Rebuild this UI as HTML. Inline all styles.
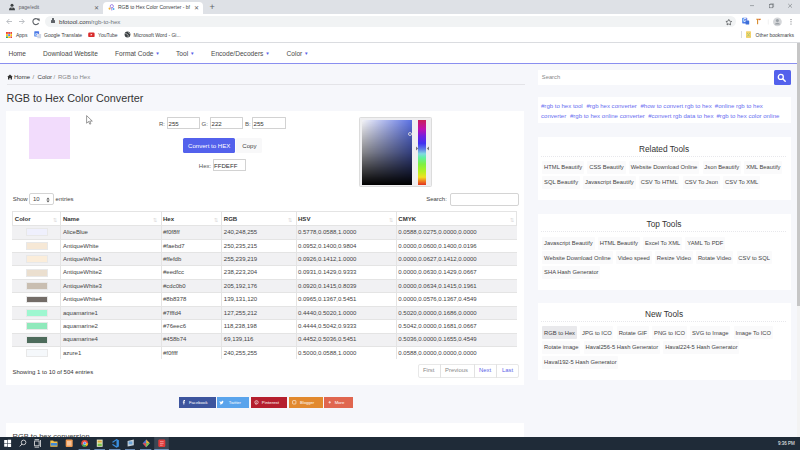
<!DOCTYPE html>
<html><head><meta charset="utf-8">
<style>
*{margin:0;padding:0;box-sizing:border-box}
html,body{width:800px;height:450px;overflow:hidden;background:#f6f7fb;font-family:"Liberation Sans",sans-serif;color:#333}
.a{position:absolute}
.t{position:absolute;white-space:nowrap;line-height:1}
/* chrome */
#tabbar{left:0;top:0;width:800px;height:14px;background:#dee1e6}
#toolbar{left:0;top:14px;width:800px;height:28.6px;background:#fff;border-bottom:0.6px solid #dadce0}
#omni{left:45px;top:16px;width:691px;height:10.5px;background:#f1f3f4;border-radius:6px}
#nav{left:0;top:42.6px;width:797px;height:21.6px;background:#fff;border-bottom:1.2px solid #8a8ff0}
#scroll{left:796.5px;top:42.6px;width:3.5px;height:395px;background:#f3f3f3}
#thumb{left:796.8px;top:42.6px;width:3.2px;height:263px;background:#c6c6c6}
.card{position:absolute;background:#fff}
.inp{position:absolute;background:#fff;border:0.6px solid #d2d2d2;border-radius:0.5px}
.tb{position:absolute;background:#f7f7f8;border-radius:1px}
#taskbar{left:0;top:437px;width:800px;height:13px;background:#1f2b38}
table{border-collapse:collapse}
</style></head><body>

<!-- tab bar -->
<div id="tabbar" class="a"></div>
<div class="a" style="left:103px;top:2px;width:100px;height:12px;background:#fff;border-radius:4px 4px 0 0"></div>
<svg class="a" style="left:8px;top:3px" width="8" height="8" viewBox="0 0 8 8"><circle cx="4" cy="2.3" r="1.5" fill="#3c4043"/><path d="M1 7.2C1 5 2.2 4.2 4 4.2S7 5 7 7.2z" fill="#3c4043"/><path d="M3.4 4.3 4 6 4.6 4.3" fill="#fff" stroke="none"/></svg>
<svg class="a" style="left:108px;top:3.5px" width="7" height="7" viewBox="0 0 7 7"><circle cx="3.8" cy="2.2" r="1.6" fill="none" stroke="#8a6de0" stroke-width="0.8"/><path d="M3.8 3.8V6.5" stroke="#8a6de0" stroke-width="0.8"/><circle cx="1.6" cy="4.6" r="1.1" fill="#f0b030"/><circle cx="5.6" cy="5" r="0.9" fill="#40b0f0"/></svg>
<div class="t" style="left:18.7px;top:5px;font-size:5px;color:#5f6368">page/edit</div>
<div class="t" style="left:94px;top:4.5px;font-size:6px;color:#5f6368">✕</div>
<div class="t" style="left:118px;top:5px;font-size:5px;color:#3c4043">RGB to Hex Color Converter - bf</div>
<div class="t" style="left:193.8px;top:4.5px;font-size:6px;color:#5f6368">✕</div>
<div class="t" style="left:209.5px;top:3px;font-size:9px;color:#5f6368">+</div>
<div class="t" style="left:150px;top:3px;font-size:7px;color:#5f6368;display:none">x</div>
<svg class="a" style="left:720px;top:0;z-index:5" width="80" height="42" viewBox="0 0 80 42"><g transform="translate(20 0)"><g fill="none" stroke="#6b6f74" stroke-width="0.55"><path d="M10 5.6h4"/><rect x="29.6" y="4.6" width="3.2" height="3.2"/><path d="M30.4 4.6V3.8h3.2v3.2h-0.8"/><path d="M48.2 3.9l3.8 3.8M52 3.9l-3.8 3.8"/></g><path d="M-11.2 19.4l0.9 1.8 2 0.3-1.45 1.4 0.35 2-1.8-0.95-1.8 0.95 0.35-2-1.45-1.4 2-0.3z" fill="none" stroke="#3c4043" stroke-width="0.65" stroke-linejoin="round"/><rect x="2.2" y="17.8" width="5" height="5.6" rx="0.6" fill="#4b78e6"/><text x="2.9" y="22.4" font-size="4.6" font-family="Liberation Sans" font-weight="bold" fill="#fff">G</text><rect x="5.6" y="20.6" width="3.6" height="3.8" rx="0.5" fill="#3c6fd8"/><path d="M16.3 19.2h4.6M17.6 19.2v5" stroke="#d88a2a" stroke-width="1.1"/><path d="M19.6 19v1.2" stroke="#e04040" stroke-width="0.8"/><path d="M28.3 19.5v5" stroke="#e3e3e3" stroke-width="0.5"/><circle cx="37.4" cy="21.8" r="4.4" fill="#d4d6d9"/><circle cx="37.4" cy="20.4" r="1.5" fill="#9aa0a6"/><path d="M34.6 24.6a2.9 2.4 0 0 1 5.6 0z" fill="#9aa0a6"/><g fill="#5f6368"><circle cx="51" cy="19.6" r="0.55"/><circle cx="51" cy="21.8" r="0.55"/><circle cx="51" cy="24" r="0.55"/></g><rect x="6" y="31.3" width="5" height="6.6" rx="0.6" fill="#f4d36b"/><path d="M7 33l1.5 1.5 1.5-1.5M7 36.5l1.5-1.5 1.5 1.5" stroke="#7fc37a" stroke-width="0.6" fill="none"/></g></svg>



<!-- toolbar -->
<div id="toolbar" class="a"></div>
<div id="omni" class="a"></div>
<svg class="a" style="left:0;top:14px" width="50" height="20" viewBox="0 0 50 20"><path d="M12 7.5H6.8M9.3 5 6.8 7.5 9.3 10" fill="none" stroke="#b5b9be" stroke-width="0.9"/><path d="M19 7.5H24.2M21.7 5 24.2 7.5 21.7 10" fill="none" stroke="#b5b9be" stroke-width="0.9"/><path d="M38.6 6.3A3 3 0 1 0 38.6 8.9" fill="none" stroke="#5f6368" stroke-width="1.1"/><path d="M36.6 4.4h3v3z" fill="#5f6368"/></svg>
<div class="a" style="left:51px;top:20px;width:3.5px;height:3px;background:#5f6368;border-radius:0.5px"></div>
<div class="a" style="left:51.6px;top:18.3px;width:2.4px;height:2.6px;border:0.7px solid #5f6368;border-bottom:none;border-radius:1.2px 1.2px 0 0"></div>
<div class="t" style="left:59px;top:18.8px;font-size:6.15px;color:#3c4043">bfotool.com<span style="color:#70757a">/rgb-to-hex</span></div>






<!-- bookmarks -->
<svg class="a" style="left:5.8px;top:31.5px" width="6.5" height="6.5" viewBox="0 0 6.5 6.5"><rect x="0.0" y="0.0" width="1.9" height="1.9" fill="#ea4335"/><rect x="2.2" y="0.0" width="1.9" height="1.9" fill="#ea4335"/><rect x="4.4" y="0.0" width="1.9" height="1.9" fill="#ea4335"/><rect x="0.0" y="2.2" width="1.9" height="1.9" fill="#fbbc04"/><rect x="2.2" y="2.2" width="1.9" height="1.9" fill="#4285f4"/><rect x="4.4" y="2.2" width="1.9" height="1.9" fill="#fbbc04"/><rect x="0.0" y="4.4" width="1.9" height="1.9" fill="#34a853"/><rect x="2.2" y="4.4" width="1.9" height="1.9" fill="#fbbc04"/><rect x="4.4" y="4.4" width="1.9" height="1.9" fill="#ea4335"/></svg>
<div class="t" style="left:16px;top:33px;font-size:5px;color:#3c4043">Apps</div>
<svg class="a" style="left:33.5px;top:31px" width="8" height="8" viewBox="0 0 8 8"><rect x="0.3" y="0.2" width="4.8" height="5.4" rx="0.6" fill="#4b78e6"/><rect x="3.3" y="3" width="3.8" height="4.2" rx="0.5" fill="#cfd6e4"/><text x="0.9" y="4.6" font-size="4.3" font-family="Liberation Sans" font-weight="bold" fill="#fff">G</text></svg>
<div class="t" style="left:44px;top:33px;font-size:5px;color:#3c4043">Google Translate</div>
<svg class="a" style="left:87.5px;top:31.8px" width="7" height="6" viewBox="0 0 7 6"><rect x="0.2" y="0.5" width="6.4" height="4.6" rx="1.2" fill="#d92b2b"/><path d="M2.7 1.8v2l1.7-1z" fill="#fff"/></svg>
<div class="t" style="left:98px;top:33px;font-size:5px;color:#3c4043">YouTube</div>
<svg class="a" style="left:123.5px;top:31px" width="7" height="7" viewBox="0 0 7 7"><circle cx="3.5" cy="3.5" r="2.9" fill="#3c4043"/><path d="M1.2 2.6C2.4 2.2 2.8 3.4 3.6 3.6S4.4 5.2 3.8 6.2M4.8 1.1C4.4 1.8 5 2.4 6 2.6" fill="none" stroke="#fff" stroke-width="0.55"/></svg>
<div class="t" style="left:133.5px;top:33px;font-size:5px;color:#3c4043">Microsoft Word - Gi...</div>
<div class="a" style="left:740.5px;top:31px;width:0.6px;height:7px;background:#dadce0"></div>

<div class="t" style="left:755.6px;top:33px;font-size:5px;color:#3c4043">Other bookmarks</div>

<!-- nav -->
<div id="nav" class="a"></div>
<div class="t" style="left:8.4px;top:50.5px;font-size:6.6px;color:#4a4a4a">Home</div>
<div class="t" style="left:43px;top:50.5px;font-size:6.6px;color:#4a4a4a">Download Website</div>
<div class="t" style="left:115px;top:50.5px;font-size:6.6px;color:#4a4a4a">Format Code <span style="color:#5a63e8;font-size:4.6px;position:relative;top:-0.6px">&#9660;</span></div>
<div class="t" style="left:176px;top:50.5px;font-size:6.6px;color:#4a4a4a">Tool <span style="color:#5a63e8;font-size:4.6px;position:relative;top:-0.6px">&#9660;</span></div>
<div class="t" style="left:211px;top:50.5px;font-size:6.6px;color:#4a4a4a">Encode/Decoders <span style="color:#5a63e8;font-size:4.6px;position:relative;top:-0.6px">&#9660;</span></div>
<div class="t" style="left:286.5px;top:50.5px;font-size:6.6px;color:#4a4a4a">Color <span style="color:#5a63e8;font-size:4.6px;position:relative;top:-0.6px">&#9660;</span></div>
<div id="scroll" class="a"></div>
<div id="thumb" class="a"></div>

<!-- breadcrumb -->
<svg class="a" style="left:6.5px;top:74px" width="6" height="6" viewBox="0 0 6 6"><path d="M0.2 3.1 3 0.6 5.8 3.1H5V5.6H3.6V4H2.4V5.6H1V3.1z" fill="#333"/></svg>
<div class="t" style="left:14px;top:74.3px;font-size:6.05px;color:#333">Home</div>
<div class="t" style="left:32.5px;top:74.3px;font-size:6.05px;color:#777">/</div>
<div class="t" style="left:37.6px;top:74.3px;font-size:6.05px;color:#444">Color</div>
<div class="t" style="left:53.6px;top:74.3px;font-size:6.05px;color:#888">/</div>
<div class="t" style="left:58px;top:74.3px;font-size:6.05px;color:#888">RGB to Hex</div>
<div class="a" style="left:6.5px;top:84px;width:518px;height:0.6px;background:#e4e4e8"></div>
<div class="t" style="left:6.6px;top:92.5px;font-size:10.8px;color:#333">RGB to Hex Color Converter</div>

<!-- main card -->
<div class="card" style="left:6px;top:111px;width:518.3px;height:273.6px"></div>
<div class="a" style="left:29px;top:117px;width:41.4px;height:41.7px;background:#f2dcfc"></div>

<div class="t" style="left:159px;top:120.5px;font-size:6px;color:#555">R:</div>
<div class="inp" style="left:166.5px;top:117px;width:33.2px;height:12.3px"></div>
<div class="t" style="left:168.5px;top:120.5px;font-size:6.1px;color:#333">255</div>
<div class="t" style="left:201.6px;top:120.5px;font-size:6px;color:#555">G:</div>
<div class="inp" style="left:210px;top:117px;width:33px;height:12.3px"></div>
<div class="t" style="left:211.5px;top:120.5px;font-size:6.1px;color:#333">222</div>
<div class="t" style="left:245px;top:120.5px;font-size:6px;color:#555">B:</div>
<div class="inp" style="left:252px;top:117px;width:33.5px;height:12.3px"></div>
<div class="t" style="left:253.5px;top:120.5px;font-size:6.1px;color:#333">255</div>

<div class="a" style="left:183px;top:137.6px;width:52.4px;height:15.2px;background:#5361ec;border-radius:1.5px"></div>
<div class="t" style="left:188px;top:142.6px;font-size:6.1px;color:#fff">Convert to HEX</div>
<div class="a" style="left:236px;top:137.6px;width:25.6px;height:15.2px;background:#f8f8f9;border-radius:1.5px"></div>
<div class="t" style="left:242.3px;top:142.6px;font-size:6.1px;color:#444">Copy</div>

<div class="t" style="left:198.8px;top:162.5px;font-size:6px;color:#555">Hex:</div>
<div class="inp" style="left:212.5px;top:159px;width:33.2px;height:12px"></div>
<div class="t" style="left:214px;top:162.5px;font-size:6.1px;color:#333">FFDEFF</div>

<!-- picker -->
<div class="a" style="left:358.5px;top:117px;width:73.5px;height:70px;background:#efeff1;border:0.6px solid #dcdcdc;border-radius:1.5px"></div>
<div class="a" style="left:361.5px;top:120px;width:50.1px;height:64.8px;background:linear-gradient(to bottom,rgba(0,0,0,0),rgba(0,0,0,.45) 50%,#000),linear-gradient(to right,#f4f4f8,#5a70e2)"></div>
<div class="a" style="left:407.5px;top:132.4px;width:4px;height:4px;border:0.7px solid #d0d0d8;border-radius:50%"></div>
<div class="a" style="left:418px;top:120px;width:8px;height:64.8px;background:linear-gradient(to bottom,#c8205a 0%,#c010b0 14%,#7020e0 25%,#4030f0 36%,#6080e8 45%,#80d8e0 52%,#60f0a0 58%,#80f040 68%,#b8f020 80%,#f0e020 88%,#f08020 94%,#e03020 100%)"></div>
<svg class="a" style="left:414.5px;top:145.5px" width="15" height="5" viewBox="0 0 15 5"><path d="M1 0.6 3.2 2.5 1 4.4z" fill="#777"/><path d="M14 0.6 11.8 2.5 14 4.4z" fill="#777"/></svg>
<svg class="a" style="left:85.5px;top:114.5px;z-index:9" width="8" height="10" viewBox="0 0 8 10"><path d="M0.6 0.6V8.2L2.5 6.5 3.8 9.2 4.9 8.7 3.7 6.1H6.3z" fill="#fff" stroke="#555" stroke-width="0.6" stroke-linejoin="round"/></svg>
<!-- table controls -->
<div class="t" style="left:12.7px;top:196px;font-size:6px;color:#444">Show</div>
<div class="inp" style="left:29.3px;top:193.4px;width:24.9px;height:11.8px;border-color:#d4d4d4;border-radius:2px"></div>
<div class="t" style="left:33px;top:196px;font-size:6px;color:#444">10</div>
<svg class="a" style="left:45.5px;top:196.5px" width="4" height="6" viewBox="0 0 4 6"><path d="M0.4 2.6 2 0.4 3.6 2.6zM0.4 3.4 2 5.6 3.6 3.4z" fill="#555"/></svg>
<div class="t" style="left:55.6px;top:196px;font-size:6px;color:#444">entries</div>
<div class="t" style="left:426.2px;top:196px;font-size:6px;color:#444">Search:</div>
<div class="inp" style="left:450px;top:193.1px;width:68.8px;height:12.5px;border-color:#d4d4d4;border-radius:2px"></div>

<!-- table -->
<div class="a" style="left:12.3px;top:211.3px;width:504.49999999999994px;height:148.1px;background:#fff;border:0.6px solid #e4e4e4"></div>
<div class="a" style="left:12.3px;top:225.20px;width:504.49999999999994px;height:13.42px;background:#f1f1f3;border-top:0.6px solid #e4e4e4"></div>
<div class="a" style="left:26px;top:228.40px;width:22px;height:7.9px;background:#eff0fd;border:0.5px solid #e8e8e8"></div>
<div class="t" style="left:62.9px;top:229.10px;font-size:6px;color:#444">AliceBlue</div>
<div class="t" style="left:163.0px;top:229.10px;font-size:6px;color:#444">#f0f8ff</div>
<div class="t" style="left:223.8px;top:229.10px;font-size:6px;color:#444">240,248,255</div>
<div class="t" style="left:298.0px;top:229.10px;font-size:6px;color:#444">0.5778,0.0588,1.0000</div>
<div class="t" style="left:398.3px;top:229.10px;font-size:6px;color:#444">0.0588,0.0275,0.0000,0.0000</div>
<div class="a" style="left:12.3px;top:238.62px;width:504.49999999999994px;height:13.42px;background:#fff;border-top:0.6px solid #e4e4e4"></div>
<div class="a" style="left:26px;top:241.82px;width:22px;height:7.9px;background:#f6e8d6;border:0.5px solid #e8e8e8"></div>
<div class="t" style="left:62.9px;top:242.52px;font-size:6px;color:#444">AntiqueWhite</div>
<div class="t" style="left:163.0px;top:242.52px;font-size:6px;color:#444">#faebd7</div>
<div class="t" style="left:223.8px;top:242.52px;font-size:6px;color:#444">250,235,215</div>
<div class="t" style="left:298.0px;top:242.52px;font-size:6px;color:#444">0.0952,0.1400,0.9804</div>
<div class="t" style="left:398.3px;top:242.52px;font-size:6px;color:#444">0.0000,0.0600,0.1400,0.0196</div>
<div class="a" style="left:12.3px;top:252.04px;width:504.49999999999994px;height:13.42px;background:#f1f1f3;border-top:0.6px solid #e4e4e4"></div>
<div class="a" style="left:26px;top:255.24px;width:22px;height:7.9px;background:#fbedda;border:0.5px solid #e8e8e8"></div>
<div class="t" style="left:62.9px;top:255.94px;font-size:6px;color:#444">AntiqueWhite1</div>
<div class="t" style="left:163.0px;top:255.94px;font-size:6px;color:#444">#ffefdb</div>
<div class="t" style="left:223.8px;top:255.94px;font-size:6px;color:#444">255,239,219</div>
<div class="t" style="left:298.0px;top:255.94px;font-size:6px;color:#444">0.0926,0.1412,1.0000</div>
<div class="t" style="left:398.3px;top:255.94px;font-size:6px;color:#444">0.0000,0.0627,0.1412,0.0000</div>
<div class="a" style="left:12.3px;top:265.46px;width:504.49999999999994px;height:13.42px;background:#fff;border-top:0.6px solid #e4e4e4"></div>
<div class="a" style="left:26px;top:268.66px;width:22px;height:7.9px;background:#ebdfcf;border:0.5px solid #e8e8e8"></div>
<div class="t" style="left:62.9px;top:269.36px;font-size:6px;color:#444">AntiqueWhite2</div>
<div class="t" style="left:163.0px;top:269.36px;font-size:6px;color:#444">#eedfcc</div>
<div class="t" style="left:223.8px;top:269.36px;font-size:6px;color:#444">238,223,204</div>
<div class="t" style="left:298.0px;top:269.36px;font-size:6px;color:#444">0.0931,0.1429,0.9333</div>
<div class="t" style="left:398.3px;top:269.36px;font-size:6px;color:#444">0.0000,0.0630,0.1429,0.0667</div>
<div class="a" style="left:12.3px;top:278.88px;width:504.49999999999994px;height:13.42px;background:#f1f1f3;border-top:0.6px solid #e4e4e4"></div>
<div class="a" style="left:26px;top:282.08px;width:22px;height:7.9px;background:#c9beb1;border:0.5px solid #e8e8e8"></div>
<div class="t" style="left:62.9px;top:282.78px;font-size:6px;color:#444">AntiqueWhite3</div>
<div class="t" style="left:163.0px;top:282.78px;font-size:6px;color:#444">#cdc0b0</div>
<div class="t" style="left:223.8px;top:282.78px;font-size:6px;color:#444">205,192,176</div>
<div class="t" style="left:298.0px;top:282.78px;font-size:6px;color:#444">0.0920,0.1415,0.8039</div>
<div class="t" style="left:398.3px;top:282.78px;font-size:6px;color:#444">0.0000,0.0634,0.1415,0.1961</div>
<div class="a" style="left:12.3px;top:292.30px;width:504.49999999999994px;height:13.42px;background:#fff;border-top:0.6px solid #e4e4e4"></div>
<div class="a" style="left:26px;top:295.50px;width:22px;height:7.9px;background:#736c67;border:0.5px solid #e8e8e8"></div>
<div class="t" style="left:62.9px;top:296.20px;font-size:6px;color:#444">AntiqueWhite4</div>
<div class="t" style="left:163.0px;top:296.20px;font-size:6px;color:#444">#8b8378</div>
<div class="t" style="left:223.8px;top:296.20px;font-size:6px;color:#444">139,131,120</div>
<div class="t" style="left:298.0px;top:296.20px;font-size:6px;color:#444">0.0965,0.1367,0.5451</div>
<div class="t" style="left:398.3px;top:296.20px;font-size:6px;color:#444">0.0000,0.0576,0.1367,0.4549</div>
<div class="a" style="left:12.3px;top:305.72px;width:504.49999999999994px;height:13.42px;background:#f1f1f3;border-top:0.6px solid #e4e4e4"></div>
<div class="a" style="left:26px;top:308.92px;width:22px;height:7.9px;background:#9ef7d0;border:0.5px solid #e8e8e8"></div>
<div class="t" style="left:62.9px;top:309.62px;font-size:6px;color:#444">aquamarine1</div>
<div class="t" style="left:163.0px;top:309.62px;font-size:6px;color:#444">#7fffd4</div>
<div class="t" style="left:223.8px;top:309.62px;font-size:6px;color:#444">127,255,212</div>
<div class="t" style="left:298.0px;top:309.62px;font-size:6px;color:#444">0.4440,0.5020,1.0000</div>
<div class="t" style="left:398.3px;top:309.62px;font-size:6px;color:#444">0.5020,0.0000,0.1686,0.0000</div>
<div class="a" style="left:12.3px;top:319.14px;width:504.49999999999994px;height:13.42px;background:#fff;border-top:0.6px solid #e4e4e4"></div>
<div class="a" style="left:26px;top:322.34px;width:22px;height:7.9px;background:#8fe9bb;border:0.5px solid #e8e8e8"></div>
<div class="t" style="left:62.9px;top:323.04px;font-size:6px;color:#444">aquamarine2</div>
<div class="t" style="left:163.0px;top:323.04px;font-size:6px;color:#444">#76eec6</div>
<div class="t" style="left:223.8px;top:323.04px;font-size:6px;color:#444">118,238,198</div>
<div class="t" style="left:298.0px;top:323.04px;font-size:6px;color:#444">0.4444,0.5042,0.9333</div>
<div class="t" style="left:398.3px;top:323.04px;font-size:6px;color:#444">0.5042,0.0000,0.1681,0.0667</div>
<div class="a" style="left:12.3px;top:332.56px;width:504.49999999999994px;height:13.42px;background:#f1f1f3;border-top:0.6px solid #e4e4e4"></div>
<div class="a" style="left:26px;top:335.76px;width:22px;height:7.9px;background:#4d6b5b;border:0.5px solid #e8e8e8"></div>
<div class="t" style="left:62.9px;top:336.46px;font-size:6px;color:#444">aquamarine4</div>
<div class="t" style="left:163.0px;top:336.46px;font-size:6px;color:#444">#458b74</div>
<div class="t" style="left:223.8px;top:336.46px;font-size:6px;color:#444">69,139,116</div>
<div class="t" style="left:298.0px;top:336.46px;font-size:6px;color:#444">0.4452,0.5036,0.5451</div>
<div class="t" style="left:398.3px;top:336.46px;font-size:6px;color:#444">0.5036,0.0000,0.1655,0.4549</div>
<div class="a" style="left:12.3px;top:345.98px;width:504.49999999999994px;height:13.42px;background:#fff;border-top:0.6px solid #e4e4e4"></div>
<div class="a" style="left:26px;top:349.18px;width:22px;height:7.9px;background:#f5f8fb;border:0.5px solid #e8e8e8"></div>
<div class="t" style="left:62.9px;top:349.88px;font-size:6px;color:#444">azure1</div>
<div class="t" style="left:163.0px;top:349.88px;font-size:6px;color:#444">#f0ffff</div>
<div class="t" style="left:223.8px;top:349.88px;font-size:6px;color:#444">240,255,255</div>
<div class="t" style="left:298.0px;top:349.88px;font-size:6px;color:#444">0.5000,0.0588,1.0000</div>
<div class="t" style="left:398.3px;top:349.88px;font-size:6px;color:#444">0.0588,0.0000,0.0000,0.0000</div>
<div class="a" style="left:60.4px;top:211.3px;width:0.6px;height:148.1px;background:#e4e4e4"></div>
<div class="a" style="left:160.5px;top:211.3px;width:0.6px;height:148.1px;background:#e4e4e4"></div>
<div class="a" style="left:221.3px;top:211.3px;width:0.6px;height:148.1px;background:#e4e4e4"></div>
<div class="a" style="left:295.5px;top:211.3px;width:0.6px;height:148.1px;background:#e4e4e4"></div>
<div class="a" style="left:395.8px;top:211.3px;width:0.6px;height:148.1px;background:#e4e4e4"></div>
<div class="t" style="left:14.8px;top:215.60px;font-size:6.05px;font-weight:bold;color:#333">Color</div>
<div class="t" style="left:53.1px;top:218.50px;font-size:4.5px;color:#d8d8d8">&#8645;</div>
<div class="t" style="left:62.9px;top:215.60px;font-size:6.05px;font-weight:bold;color:#333">Name</div>
<div class="t" style="left:153.2px;top:218.50px;font-size:4.5px;color:#d8d8d8">&#8645;</div>
<div class="t" style="left:163.0px;top:215.60px;font-size:6.05px;font-weight:bold;color:#333">Hex</div>
<div class="t" style="left:214.0px;top:218.50px;font-size:4.5px;color:#d8d8d8">&#8645;</div>
<div class="t" style="left:223.8px;top:215.60px;font-size:6.05px;font-weight:bold;color:#333">RGB</div>
<div class="t" style="left:288.2px;top:218.50px;font-size:4.5px;color:#d8d8d8">&#8645;</div>
<div class="t" style="left:298.0px;top:215.60px;font-size:6.05px;font-weight:bold;color:#333">HSV</div>
<div class="t" style="left:388.5px;top:218.50px;font-size:4.5px;color:#d8d8d8">&#8645;</div>
<div class="t" style="left:398.3px;top:215.60px;font-size:6.05px;font-weight:bold;color:#333">CMYK</div>
<div class="t" style="left:509.49999999999994px;top:218.50px;font-size:4.5px;color:#d8d8d8">&#8645;</div>

<div class="t" style="left:12.5px;top:368.8px;font-size:5.98px;color:#333">Showing 1 to 10 of 504 entries</div>
<div class="a" style="left:418.3px;top:363.5px;width:100.4px;height:14.2px;border:0.6px solid #e8e8e8;border-radius:2px;background:#fff"></div>
<div class="a" style="left:440.3px;top:363.5px;width:0.6px;height:14.2px;background:#e2e2e2"></div>
<div class="a" style="left:474.1px;top:363.5px;width:0.6px;height:14.2px;background:#e2e2e2"></div>
<div class="a" style="left:496.4px;top:363.5px;width:0.6px;height:14.2px;background:#e2e2e2"></div>
<div class="t" style="left:423px;top:368px;font-size:5.9px;color:#888">First</div>
<div class="t" style="left:445px;top:368px;font-size:5.9px;color:#888">Previous</div>
<div class="t" style="left:479px;top:368px;font-size:5.9px;color:#5a63e8">Next</div>
<div class="t" style="left:502px;top:368px;font-size:5.9px;color:#5a63e8">Last</div>

<!-- social -->
<div class="a" style="left:178.5px;top:397.3px;width:37.5px;height:10.4px;background:#3d559e"></div>
<div class="a" style="left:217.4px;top:397.3px;width:31.6px;height:10.4px;background:#5aa4ec"></div>
<div class="a" style="left:251px;top:397.3px;width:36.3px;height:10.4px;background:#b51f2e"></div>
<div class="a" style="left:289px;top:397.3px;width:33.5px;height:10.4px;background:#e2892e"></div>
<div class="a" style="left:324.3px;top:397.3px;width:28.9px;height:10.4px;background:#e0664f"></div>
<svg class="a" style="left:178px;top:397px" width="180" height="11" viewBox="0 0 180 11"><g fill="#fff">
<path d="M5.4 7.6V5.5H4.8V4.7H5.4V4.1C5.4 3.5 5.7 3.1 6.4 3.1H7V3.9H6.6C6.4 3.9 6.3 4 6.3 4.2V4.7H7L6.9 5.5H6.3V7.6z"/>
<g transform="translate(43.5 5.3) scale(0.65) translate(-41.6 -5.5)"><path d="M44.2 4c.4-.1.7-.4.9-.7-.4.2-.7.3-1 .3a1.4 1.4 0 0 0-2.4 1.3A4 4 0 0 1 38.8 3.5a1.4 1.4 0 0 0 .4 1.9c-.2 0-.5-.1-.6-.2 0 .7.5 1.3 1.1 1.4-.2.1-.5.1-.6 0 .2.6.7 1 1.3 1A2.8 2.8 0 0 1 38.3 8.2 4 4 0 0 0 44.4 4.8z"/></g>
<circle cx="78.5" cy="5.3" r="1.7" fill="none" stroke="#fff" stroke-width="0.6"/><path d="M78.4 4.6 77.9 7.6" stroke="#fff" stroke-width="0.5"/>
<rect x="114.6" y="3.6" width="3.3" height="3.4" rx="0.6" fill="none" stroke="#fff" stroke-width="0.6"/>
<path d="M150.4 5.3h2.6M151.7 4v2.6" stroke="#fff" stroke-width="0.6"/>
</g></svg>
<div class="t" style="left:188.9px;top:401px;font-size:4.25px;color:#fff">Facebook</div>
<div class="t" style="left:228.7px;top:401px;font-size:4.2px;color:#fff">Twitter</div>
<div class="t" style="left:261.8px;top:401px;font-size:4.35px;color:#fff">Pinterest</div>
<div class="t" style="left:300px;top:401px;font-size:4.1px;color:#fff">Blogger</div>
<div class="t" style="left:334.7px;top:401px;font-size:4.25px;color:#fff">More</div>

<div class="card" style="left:6px;top:423px;width:518.3px;height:20px"></div>
<div class="t" style="left:12.5px;top:433.2px;font-size:7.5px;color:#3a3a3a">RGB to hex conversion</div>

<!-- sidebar -->
<div class="card" style="left:537.5px;top:70px;width:237px;height:14.7px"></div>
<div class="t" style="left:541.8px;top:75.1px;font-size:5.8px;color:#888">Search</div>
<div class="a" style="left:774.3px;top:70px;width:16.3px;height:14.8px;background:#5361ec;border-radius:1.5px"></div>
<svg class="a" style="left:774px;top:70px" width="17" height="15" viewBox="0 0 17 15"><circle cx="6.8" cy="6.9" r="2.5" fill="none" stroke="#fff" stroke-width="1.3"/><path d="M8.7 8.8 11.2 11.2" stroke="#fff" stroke-width="1.5" stroke-linecap="round"/></svg>


<div class="card" style="left:537.8px;top:97.3px;width:253.2px;height:26px"></div>
<div class="t" style="left:541px;top:103.20px;font-size:6.05px;color:#6a6ff0">#rgb to hex tool</div>
<div class="t" style="left:586.4px;top:103.20px;font-size:6.05px;color:#6a6ff0">#rgb hex converter</div>
<div class="t" style="left:640.5px;top:103.20px;font-size:6.05px;color:#6a6ff0">#how to convert rgb to hex</div>
<div class="t" style="left:714.8px;top:103.20px;font-size:6.05px;color:#6a6ff0">#online rgb to hex</div>
<div class="t" style="left:541px;top:112.60px;font-size:6.05px;color:#6a6ff0">converter</div>
<div class="t" style="left:569.9px;top:112.60px;font-size:6.05px;color:#6a6ff0">#rgb to hex online converter</div>
<div class="t" style="left:648.2px;top:112.60px;font-size:6.05px;color:#6a6ff0">#convert rgb data to hex</div>
<div class="t" style="left:716.5px;top:112.60px;font-size:6.05px;color:#6a6ff0">#rgb to hex color online</div>

<div class="card" style="left:537.6px;top:137px;width:253.4px;height:63px"></div>
<div class="t" style="left:537px;width:254px;text-align:center;top:145px;font-size:8.3px;color:#333">Related Tools</div>
<div class="a" style="left:541px;top:155.8px;width:245px;height:0;border-top:0.6px dotted #e8e8ec"></div>
<div class="tb" style="left:542.3px;top:161.00px;width:41.74px;height:13px;background:#fafafb"></div>
<div class="t" style="left:544.0999999999999px;top:165.40px;font-size:5.8px;color:#444">HTML Beautify</div>
<div class="tb" style="left:587.44px;top:161.00px;width:38.09px;height:13px;background:#fafafb"></div>
<div class="t" style="left:589.24px;top:165.40px;font-size:5.8px;color:#444">CSS Beautify</div>
<div class="tb" style="left:628.93px;top:161.00px;width:70.23px;height:13px;background:#fafafb"></div>
<div class="t" style="left:630.7299999999999px;top:165.40px;font-size:5.8px;color:#444">Website Download Online</div>
<div class="tb" style="left:702.56px;top:161.00px;width:38.42px;height:13px;background:#fafafb"></div>
<div class="t" style="left:704.3599999999999px;top:165.40px;font-size:5.8px;color:#444">Json Beautify</div>
<div class="tb" style="left:744.38px;top:161.00px;width:37.88px;height:13px;background:#fafafb"></div>
<div class="t" style="left:746.18px;top:165.40px;font-size:5.8px;color:#444">XML Beautify</div>
<div class="tb" style="left:542.3px;top:175.60px;width:37.56px;height:13px;background:#fafafb"></div>
<div class="t" style="left:544.0999999999999px;top:180.00px;font-size:5.8px;color:#444">SQL Beautify</div>
<div class="tb" style="left:583.26px;top:175.60px;width:52.27px;height:13px;background:#fafafb"></div>
<div class="t" style="left:585.06px;top:180.00px;font-size:5.8px;color:#444">Javascript Beautify</div>
<div class="tb" style="left:638.93px;top:175.60px;width:40.56px;height:13px;background:#fafafb"></div>
<div class="t" style="left:640.7299999999999px;top:180.00px;font-size:5.8px;color:#444">CSV To HTML</div>
<div class="tb" style="left:682.89px;top:175.60px;width:37.02px;height:13px;background:#fafafb"></div>
<div class="t" style="left:684.6899999999999px;top:180.00px;font-size:5.8px;color:#444">CSV To Json</div>
<div class="tb" style="left:723.31px;top:175.60px;width:36.69px;height:13px;background:#fafafb"></div>
<div class="t" style="left:725.1099999999999px;top:180.00px;font-size:5.8px;color:#444">CSV To XML</div>

<div class="card" style="left:537.6px;top:213.6px;width:253.4px;height:76.7px"></div>
<div class="t" style="left:537px;width:254px;text-align:center;top:219.8px;font-size:8.3px;color:#333">Top Tools</div>
<div class="a" style="left:541px;top:230.5px;width:245px;height:0;border-top:0.6px dotted #e8e8ec"></div>
<div class="tb" style="left:542.3px;top:236.50px;width:52.27px;height:13px;background:#fafafb"></div>
<div class="t" style="left:544.0999999999999px;top:240.90px;font-size:5.8px;color:#444">Javascript Beautify</div>
<div class="tb" style="left:597.97px;top:236.50px;width:41.74px;height:13px;background:#fafafb"></div>
<div class="t" style="left:599.77px;top:240.90px;font-size:5.8px;color:#444">HTML Beautify</div>
<div class="tb" style="left:643.12px;top:236.50px;width:38.95px;height:13px;background:#fafafb"></div>
<div class="t" style="left:644.92px;top:240.90px;font-size:5.8px;color:#444">Excel To XML</div>
<div class="tb" style="left:685.47px;top:236.50px;width:39.59px;height:13px;background:#fafafb"></div>
<div class="t" style="left:687.27px;top:240.90px;font-size:5.8px;color:#444">YAML To PDF</div>
<div class="tb" style="left:542.3px;top:251.10px;width:70.23px;height:13px;background:#fafafb"></div>
<div class="t" style="left:544.0999999999999px;top:255.50px;font-size:5.8px;color:#444">Website Download Online</div>
<div class="tb" style="left:615.93px;top:251.10px;width:35.74px;height:13px;background:#fafafb"></div>
<div class="t" style="left:617.7299999999999px;top:255.50px;font-size:5.8px;color:#444">Video speed</div>
<div class="tb" style="left:655.07px;top:251.10px;width:37.67px;height:13px;background:#fafafb"></div>
<div class="t" style="left:656.87px;top:255.50px;font-size:5.8px;color:#444">Resize Video</div>
<div class="tb" style="left:696.13px;top:251.10px;width:37.03px;height:13px;background:#fafafb"></div>
<div class="t" style="left:697.93px;top:255.50px;font-size:5.8px;color:#444">Rotate Video</div>
<div class="tb" style="left:736.56px;top:251.10px;width:35.19px;height:13px;background:#fafafb"></div>
<div class="t" style="left:738.3599999999999px;top:255.50px;font-size:5.8px;color:#444">CSV to SQL</div>
<div class="tb" style="left:542.3px;top:265.70px;width:58.08px;height:13px;background:#fafafb"></div>
<div class="t" style="left:544.0999999999999px;top:270.10px;font-size:5.8px;color:#444">SHA Hash Generator</div>

<div class="card" style="left:537.6px;top:302.8px;width:253.4px;height:77.7px"></div>
<div class="t" style="left:537px;width:254px;text-align:center;top:310.3px;font-size:8.3px;color:#333">New Tools</div>
<div class="a" style="left:541px;top:321px;width:245px;height:0;border-top:0.6px dotted #e8e8ec"></div>
<div class="tb" style="left:542.3px;top:326.40px;width:34.54px;height:13px;background:#e9e9ec"></div>
<div class="t" style="left:544.0999999999999px;top:330.80px;font-size:5.8px;color:#444">RGB to Hex</div>
<div class="tb" style="left:580.24px;top:326.40px;width:33.25px;height:13px;background:#fafafb"></div>
<div class="t" style="left:582.04px;top:330.80px;font-size:5.8px;color:#444">JPG to ICO</div>
<div class="tb" style="left:616.89px;top:326.40px;width:31.96px;height:13px;background:#fafafb"></div>
<div class="t" style="left:618.6899999999999px;top:330.80px;font-size:5.8px;color:#444">Rotate GIF</div>
<div class="tb" style="left:652.26px;top:326.40px;width:34.54px;height:13px;background:#fafafb"></div>
<div class="t" style="left:654.06px;top:330.80px;font-size:5.8px;color:#444">PNG to ICO</div>
<div class="tb" style="left:690.2px;top:326.40px;width:40.03px;height:13px;background:#fafafb"></div>
<div class="t" style="left:692.0px;top:330.80px;font-size:5.8px;color:#444">SVG to Image</div>
<div class="tb" style="left:733.62px;top:326.40px;width:39.27px;height:13px;background:#fafafb"></div>
<div class="t" style="left:735.42px;top:330.80px;font-size:5.8px;color:#444">Image To ICO</div>
<div class="tb" style="left:542.3px;top:341.00px;width:38.09px;height:13px;background:#fafafb"></div>
<div class="t" style="left:544.0999999999999px;top:345.40px;font-size:5.8px;color:#444">Rotate image</div>
<div class="tb" style="left:583.79px;top:341.00px;width:76.13px;height:13px;background:#fafafb"></div>
<div class="t" style="left:585.5899999999999px;top:345.40px;font-size:5.8px;color:#444">Haval256-5 Hash Generator</div>
<div class="tb" style="left:663.33px;top:341.00px;width:76.13px;height:13px;background:#fafafb"></div>
<div class="t" style="left:665.13px;top:345.40px;font-size:5.8px;color:#444">Haval224-5 Hash Generator</div>
<div class="tb" style="left:542.3px;top:355.60px;width:76.13px;height:13px;background:#fafafb"></div>
<div class="t" style="left:544.0999999999999px;top:360.00px;font-size:5.8px;color:#444">Haval192-5 Hash Generator</div>

<!-- taskbar -->
<div id="taskbar" class="a"></div>
<svg class="a" style="left:0;top:437px" width="180" height="13" viewBox="0 0 180 13">
<rect x="154.2" y="0" width="14.6" height="13" fill="#3b4653"/>
<g fill="#fff"><rect x="4.2" y="3" width="3.1" height="3.1"/><rect x="7.8" y="2.7" width="3.3" height="3.4"/><rect x="4.2" y="6.6" width="3.1" height="3.1"/><rect x="7.8" y="6.6" width="3.3" height="3.4"/></g>
<circle cx="23.6" cy="5.4" r="2.3" fill="none" stroke="#e8e8e8" stroke-width="0.8"/><path d="M22 7 19.8 9.4" stroke="#e8e8e8" stroke-width="0.9"/>
<g fill="none" stroke="#e8e8e8" stroke-width="0.8"><rect x="34.6" y="4" width="4.5" height="4.8"/><path d="M40.5 3v7M34.6 2.6h4.5M34.6 10.2h4.5"/></g>
<path d="M50.3 3.6h2.8l0.8 0.8h3.6v5.4h-7.2z" fill="#f3c14b"/><rect x="50.8" y="6" width="6.2" height="2.6" fill="#3f8ad8"/>
<rect x="65.7" y="2.6" width="7" height="7.4" rx="1" fill="#f09a52"/><rect x="67" y="4" width="4.4" height="4.6" fill="#f6c49a"/>
<circle cx="84.7" cy="6.3" r="3.4" fill="#e2453c"/><path d="M84.7 6.3 81.8 8 A3.4 3.4 0 0 0 86.4 9.3z" fill="#34a853"/><path d="M84.7 6.3 86.4 9.3A3.4 3.4 0 0 0 88.1 6.3z" fill="#fbbc05"/><circle cx="84.7" cy="6.3" r="1.4" fill="#4285f4" stroke="#fff" stroke-width="0.5"/>
<rect x="96.8" y="2.6" width="5.8" height="7.2" fill="#e8eccf"/><rect x="97.6" y="3.6" width="4.2" height="2" fill="#d9a93a"/><rect x="97.6" y="6.6" width="4.2" height="2.4" fill="#7cc24a"/>
<path d="M112 5l4.5-3 2.4 1.2v6.4l-2.4 1.2-4.5-3 1-0.9 3.5 2.4v-6l-3.5 2.4z" fill="#3a8fe0"/>
<path d="M127.6 4l6.2-1.4v5.6l-6.2 1.4z" fill="#c9d3db"/><rect x="128.6" y="4.4" width="3.8" height="3" fill="#6aa3d8"/>
<path d="M146.2 2.4l3.6 3.9-3.6 3.9-3.6-3.9z" fill="#4b6fd6"/><path d="M146.2 2.4l3.6 3.9h-3.6z" fill="#f1b432"/><path d="M142.6 6.3h3.6v3.9z" fill="#e84a4a"/><path d="M146.2 6.3h3.6l-3.6 3.9z" fill="#7dc84b"/>
<rect x="158.3" y="2.6" width="7" height="7.4" rx="1.2" fill="#e03b3b"/><path d="M160 4.6h3.6M160 6.4h3.6M160 8.2h2.6" stroke="#f6b0b0" stroke-width="0.7"/>
<g fill="#7fa6d6"><rect x="78.6" y="12.2" width="11.5" height="0.8"/><rect x="94.3" y="12.2" width="10.7" height="0.8"/><rect x="109" y="12.2" width="11.4" height="0.8"/><rect x="125" y="12.2" width="10" height="0.8"/><rect x="140" y="12.2" width="11.3" height="0.8"/><rect x="154.2" y="12.2" width="14.6" height="0.8"/></g>
</svg>
<div class="t" style="left:778px;top:441.6px;font-size:4.5px;color:#fff">9:36 PM</div>

</body></html>
